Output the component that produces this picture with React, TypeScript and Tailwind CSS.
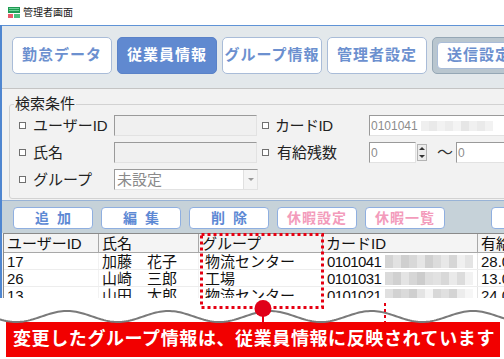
import React from 'react';

const font = "font-['Liberation_Sans','Noto_Sans_CJK_JP',sans-serif]";

const tabs = [
  { label: '勤怠データ' },
  { label: '従業員情報', active: true },
  { label: 'グループ情報' },
  { label: '管理者設定' },
];

const rows = [
  { id: '17', name: '加藤　花子', group: '物流センター', card: '0101041', days: '28.0', blur: ['#d4d4d4', '#e2e2e2', '#cfcfcf', '#d8d8d8', '#e6e6e6', '#d0d0d0', '#dcdcdc', '#e8e8e8', '#d6d6d6', '#f0f0f0', '#e4e4e4'] },
  { id: '26', name: '山崎　三郎', group: '工場', card: '0101031', days: '13.0', blur: ['#dadada', '#d0d0d0', '#e4e4e4', '#d6d6d6', '#cccccc', '#dedede', '#e2e2e2', '#d8d8d8', '#eaeaea', '#dcdcdc', '#f2f2f2'] },
  { id: '13', name: '山田　太郎', group: '物流センター', card: '0101021', days: '24.0', blur: ['#e0e0e0', '#d2d2d2', '#dadada', '#cfcfcf', '#e4e4e4', '#f4f4f4', '#d8d8d8', '#e0e0e0', '#d4d4d4', '#ececec', '#f6f6f6'] },
];

const cols = ['w-[95px]', 'w-[100px]', 'w-[124px]', 'w-[155px]', 'w-[60px]'];

function wavePath() {
  let d = '';
  for (let x = -4; x <= 510; x += 2) {
    const y = 316.5 - 5.5 * Math.cos((2 * Math.PI * (x - 67)) / 101.5);
    d += (x === -4 ? 'M' : 'L') + x + ' ' + y.toFixed(2) + ' ';
  }
  return d;
}

const Check: React.FC<{ className?: string }> = ({ className = '' }) => (
  <span className={`block w-[7px] h-[7px] border border-[#707070] bg-white shrink-0 ${className}`} />
);

const Inset: React.FC<{ className?: string; children?: React.ReactNode }> = ({ className = '', children }) => (
  <div className={`h-[21px] shrink-0 border border-t-[#9a9a9a] border-l-[#9a9a9a] border-r-[#e2e2e2] border-b-[#e2e2e2] flex items-center ${className}`}>
    {children}
  </div>
);

const App: React.FC = () => {
  return (
    <div className={`relative w-[504px] h-[359px] bg-white overflow-hidden ${font}`}>
      {/* title bar */}
      <div className="h-[25px] flex items-center pl-[8px] gap-[3px]">
        <svg width="12" height="11" viewBox="0 0 12 11">
          <rect x="0" y="0" width="12" height="6" fill="#1f9a52" />
          <rect x="1" y="1" width="10" height="1" fill="#6fd39a" />
          <rect x="1" y="3" width="10" height="1" fill="#6fd39a" />
          <rect x="0" y="7" width="5" height="4" fill="#e85a6a" />
          <rect x="6" y="7" width="6" height="4" fill="#4cbf7c" />
        </svg>
        <span className="text-[10px] leading-[12px] text-[#222]">管理者画面</span>
      </div>

      {/* screen */}
      <div className="h-[273px] overflow-hidden border-l-2 border-[#4f86d0] bg-[#f2f2f2]">
        {/* toolbar */}
        <div className="h-[64px] border-t border-t-[#5f93d6] border-b border-b-[#c4c4c4] bg-[#e3e8eb] flex gap-[5px] pt-[11px] pl-[10px]">
          {tabs.map((t) => (
            <div
              key={t.label}
              className={`w-[100px] h-[37px] shrink-0 rounded-[5px] border flex items-center justify-center text-[15px] font-bold tracking-[1px] ${
                t.active ? 'bg-[#6089d0] border-[#5a82c8] text-white' : 'bg-white border-[#a9bcd8] text-[#6c90cf]'
              }`}
            >
              {t.label}
            </div>
          ))}
          <div className="w-[90px] h-[37px] shrink-0 rounded-[5px] border border-[#95a7b5] bg-[#b9c6cf] p-[4px]">
            <div className="h-full rounded-[4px] bg-white border border-[#a9bcd8] flex items-center pl-[9px] text-[15px] font-bold tracking-[1px] text-[#6c90cf] whitespace-nowrap">
              送信設定
            </div>
          </div>
        </div>

        {/* search conditions */}
        <fieldset className="mt-[7px] mb-[1px] ml-[7px] w-[520px] border border-[#d2d2d2] rounded-[3px] pl-[4px] pb-[8px] text-[15px] leading-[16px] text-[#222]">
          <legend className="px-[1px]">検索条件</legend>
          <div className="pl-[5px] mt-[3px] flex flex-col gap-[6px]">
            <div className="flex items-center">
              <Check />
              <span className="w-[88px] pl-[7px]">ユーザーID</span>
              <Inset className="w-[143px] bg-[#f0f0f0]" />
              <Check className="ml-[5px]" />
              <span className="w-[100px] pl-[6px] tracking-[-0.5px]">カードID</span>
              <Inset className="w-[150px] bg-white text-[12px] text-[#8c8c8c] pl-[1px]">
                0101041
                <span className="ml-[3px] flex gap-0 opacity-80 blur-[0.6px]">
                  {['#ececec', '#e4e4e4', '#f0f0f0', '#e8e8e8', '#f2f2f2', '#e0e0e0', '#ededed', '#e6e6e6', '#f0f0f0'].map((c, i) => (
                    <span key={i} className="w-[8px] h-[10px]" style={{ background: c }} />
                  ))}
                </span>
              </Inset>
            </div>
            <div className="flex items-center">
              <Check />
              <span className="w-[88px] pl-[7px]">氏名</span>
              <Inset className="w-[143px] bg-[#f0f0f0]" />
              <Check className="ml-[5px]" />
              <span className="w-[100px] pl-[8px]">有給残数</span>
              <Inset className="w-[47px] bg-white text-[12px] text-[#8c8c8c] pl-[1px]">0</Inset>
              <div className="w-[10px] h-[17px] ml-[1px] shrink-0 bg-[#ececec] border border-[#b4b4b4] flex flex-col items-center justify-around">
                <span className="w-0 h-0 border-l-[3px] border-r-[3px] border-b-[3px] border-l-transparent border-r-transparent border-b-[#333]" />
                <span className="w-0 h-0 border-l-[3px] border-r-[3px] border-t-[3px] border-l-transparent border-r-transparent border-t-[#333]" />
              </div>
              <span className="ml-[10px] w-[19px] shrink-0 text-[16px] text-[#333]">～</span>
              <Inset className="w-[60px] bg-white text-[12px] text-[#8c8c8c] pl-[1px]">0</Inset>
            </div>
            <div className="flex items-center">
              <Check />
              <span className="w-[88px] pl-[7px]">グループ</span>
              <Inset className="w-[144px] bg-white text-[#8a8a8a] pl-[2px] justify-between">
                <span>未設定</span>
                <span className="w-[14px] h-[19px] bg-[#f4f4f4] border-l border-[#e0e0e0] flex items-center justify-center">
                  <span className="w-0 h-0 border-l-[3px] border-r-[3px] border-t-[3px] border-l-transparent border-r-transparent border-t-[#9a9a9a]" />
                </span>
              </Inset>
            </div>
          </div>
        </fieldset>

        {/* command strip */}
        <div className="h-[33px] border-t border-[#98b3d6] bg-[#c6d2d9] flex gap-[8px] pt-[6px] pl-[11px]">
          {['追加', '編集', '削除'].map((l) => (
            <div key={l} className="w-[80px] h-[22px] shrink-0 rounded-[4px] border border-[#8fafe0] bg-white flex items-center justify-center pl-[8px] text-[14px] font-bold tracking-[8px] text-[#5d89d4]">
              {l}
            </div>
          ))}
          {['休暇設定', '休暇一覧'].map((l) => (
            <div key={l} className="w-[80px] h-[22px] shrink-0 rounded-[4px] border border-[#8fafe0] bg-white flex items-center justify-center text-[14px] font-bold tracking-[1px] text-[#f39bbb]">
              {l}
            </div>
          ))}
          <div className="ml-[38px] w-[80px] h-[22px] shrink-0 rounded-[4px] border border-[#8fafe0] bg-white" />
        </div>

        {/* table */}
        <div className="ml-[1px] border-t border-l border-[#8a8a8a] bg-white text-[15px] leading-[17px] text-[#111] w-[540px]">
          <div className="h-[19px] flex border-b border-[#a8a8a8] bg-[#f4f4f4]">
            {['ユーザーID', '氏名', 'グループ', 'カードID', '有給残数'].map((h, i) => (
              <div key={h} className={`${cols[i]} shrink-0 border-r border-[#a8a8a8] pl-[3px] pt-[1px] whitespace-nowrap`}>
                {h}
              </div>
            ))}
          </div>
          {rows.map((r) => (
            <div key={r.id} className="h-[17px] flex border-b border-[#ededed]">
              <div className={`${cols[0]} shrink-0 pl-[3px] border-r border-[#f2f2f2]`}>{r.id}</div>
              <div className={`${cols[1]} shrink-0 pl-[3px] border-r border-[#f2f2f2]`}>{r.name}</div>
              <div className={`${cols[2]} shrink-0 pl-[6px] border-r border-[#f2f2f2]`}>{r.group}</div>
              <div className={`${cols[3]} shrink-0 pl-[4px] border-r border-[#e4e4e4] flex items-center`}>
                <span className="tracking-[-0.6px]">{r.card}</span>
                <span className="ml-[4px] flex blur-[0.4px]">
                  {r.blur.map((c, i) => (
                    <span key={i} className="w-[8px] h-[13px]" style={{ background: c }} />
                  ))}
                </span>
              </div>
              <div className={`${cols[4]} shrink-0 pl-[3px]`}>{r.days}</div>
            </div>
          ))}
        </div>
      </div>

      {/* callout */}
      <div className="mt-[24px] ml-[6px] w-[494px] h-[35px] bg-[#f20000] flex items-center pl-[7px] text-white text-[18px] font-bold tracking-[0.6px] whitespace-nowrap">
        変更したグループ情報は、従業員情報に反映されています
      </div>

      {/* annotations */}
      <svg className="absolute left-0 top-0 pointer-events-none" width="504" height="359" viewBox="0 0 504 359">
        <path d={wavePath()} fill="none" stroke="#7a7a7a" strokeWidth="2" />
        <rect x="201.5" y="234.5" width="121" height="73" fill="none" stroke="#e60012" strokeWidth="3" strokeDasharray="3 3" />
        <line x1="385" y1="303" x2="385" y2="322" stroke="#e60012" strokeWidth="2" strokeDasharray="3 3" />
        <line x1="263" y1="308" x2="263" y2="323" stroke="#e60012" strokeWidth="2" />
        <circle cx="263" cy="308.5" r="8.5" fill="#e00018" />
      </svg>
    </div>
  );
};

export default App;
